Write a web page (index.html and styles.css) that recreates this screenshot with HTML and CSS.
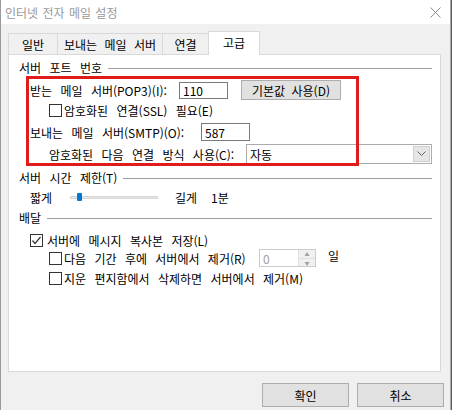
FILE: index.html
```html
<!DOCTYPE html>
<html lang="ko">
<head>
    <meta charset="UTF-8">
    <title>인터넷 전자 메일 설정</title>
    <link rel="stylesheet" href="styles.css">
</head>
<body>
    <div class="window">
        <div class="titlebar">
            <span class="title">인터넷 전자 메일 설정</span>
            <svg class="close" width="11" height="11" viewBox="0 0 11 11">
                <path d="M0.5 0.5 L10.5 10.5 M10.5 0.5 L0.5 10.5" stroke="#8c8c8c" stroke-width="1" fill="none"/>
            </svg>
        </div>

        <div class="content">
            <div class="tabs">
                <div class="tab tab-general">일반</div>
                <div class="tab tab-outgoing">보내는 메일 서버</div>
                <div class="tab tab-connect">연결</div>
                <div class="tab tab-advanced active">고급</div>
            </div>

            <div class="panel">
                <div class="group-title">서버 포트 번호</div>

                <div class="row row-pop">
                    <span class="label label-pop">받는 메일 서버(POP3)(I):</span>
                    <div class="textbox tb-pop">110</div>
                    <div class="button btn-default">기본값 사용(D)</div>
                </div>
                <div class="row row-ssl">
                    <span class="checkbox"></span>
                    <span class="check-label">암호화된 연결(SSL) 필요(E)</span>
                </div>
                <div class="row row-smtp">
                    <span class="label label-smtp">보내는 메일 서버(SMTP)(O):</span>
                    <div class="textbox tb-smtp">587</div>
                </div>
                <div class="row row-enc">
                    <span class="label label-enc">암호화된 다음 연결 방식 사용(C):</span>
                    <div class="select">
                        <span class="select-value">자동</span>
                        <span class="select-arrow">
                            <svg width="9" height="6" viewBox="0 0 9 6">
                                <path d="M0.5 0.5 L4.5 4.5 L8.5 0.5" stroke="#606060" fill="none"/>
                            </svg>
                        </span>
                    </div>
                </div>

                <div class="group-title group-timeout">서버 시간 제한(T)</div>
                <div class="row row-slider">
                    <span class="slider-short">짧게</span>
                    <div class="slider">
                        <div class="slider-track"></div>
                        <div class="slider-thumb"></div>
                    </div>
                    <span class="slider-long">길게</span>
                    <span>1분</span>
                </div>

                <div class="group-title group-delivery">배달</div>
                <div class="row row-keep">
                    <span class="checkbox checked">
                        <svg width="11" height="11" viewBox="0 0 11 11">
                            <path d="M1.5 5.5 L4 8.5 L9.5 2" stroke="#333" stroke-width="1.2" fill="none"/>
                        </svg>
                    </span>
                    <span class="check-label">서버에 메시지 복사본 저장(L)</span>
                </div>
                <div class="row row-remove">
                    <span class="checkbox"></span>
                    <span class="check-label label-remove">다음 기간 후에 서버에서 제거(R)</span>
                    <div class="spin">
                        <span class="spin-value">0</span>
                        <span class="spin-buttons">
                            <span class="spin-up">▲</span>
                            <span class="spin-down">▼</span>
                        </span>
                    </div>
                    <span class="days">일</span>
                </div>
                <div class="row row-deleted">
                    <span class="checkbox"></span>
                    <span class="check-label">지운 편지함에서 삭제하면 서버에서 제거(M)</span>
                </div>

                <div class="highlight"></div>
            </div>

            <div class="dialog-buttons">
                <div class="button btn-dialog">확인</div>
                <div class="button btn-dialog">취소</div>
            </div>
        </div>
    </div>
</body>
</html>
```

FILE: styles.css
```css
body {
    margin: 0;
    overflow: hidden;
    background-color: #5a5a5a;
    font-family: "Noto Sans CJK KR", sans-serif;
    font-size: 12px;
    color: #000;
    word-spacing: 5px;
}
.window {
    width: 449px;
    height: 410px;
    background-color: #f0f0f0;
    border-left: 1px solid #9a9a9a;
    border-right: 1px solid #aaaaaa;
}
.titlebar {
    height: 24px;
    background-color: #fff;
    display: flex;
    align-items: center;
    justify-content: space-between;
    padding: 0 9px 0 4px;
}
.title {
    color: #9a9a9a;
    font-size: 12px;
    word-spacing: 1px;
}
.close {
    margin-top: 1px;
}
.content {
    padding: 8px 0 0 7px;
}

/* pestañas */
.tabs {
    display: flex;
    align-items: flex-end;
    height: 22px;
}
.tab {
    height: 21px;
    box-sizing: border-box;
    border: 1px solid #d9d9d9;
    border-bottom: none;
    margin-right: -1px;
    display: flex;
    align-items: center;
    justify-content: center;
    font-size: 12px;
    word-spacing: 4px;
    background-color: #f0f0f0;
}
.tab-general { width: 50px; }
.tab-outgoing { width: 106px; }
.tab-connect { width: 47px; }
.tab-advanced { width: 52px; }
.tab.active {
    height: 24px;
    margin-bottom: -1px;
    background-color: #fff;
    position: relative;
    z-index: 1;
    padding-bottom: 3px;
}

.panel {
    position: relative;
    width: 431px;
    height: 312px;
    background-color: #fff;
    border: 1px solid #d9d9d9;
    padding: 4px 8px 0 10px;
    box-sizing: content-box;
    width: 413px;
}
.group-title {
    display: flex;
    align-items: center;
    height: 16px;
}
.group-title::after {
    content: "";
    flex-grow: 1;
    border-top: 1px solid #a0a0a0;
    margin-left: 6px;
    margin-top: 2px;
}
.group-timeout { margin-top: 5px; }
.group-delivery { margin-top: 4px; }

.row {
    display: flex;
    align-items: center;
    white-space: nowrap;
}
.row-pop { height: 20px; margin-top: 5px; padding-left: 11px; }
.row-ssl { height: 16px; margin-top: 2px; padding-left: 30px; }
.row-smtp { height: 18px; margin-top: 5px; padding-left: 11px; }
.row-enc { height: 20px; margin-top: 3px; padding-left: 30px; }
.row-slider { height: 16px; margin-top: 4px; padding-left: 11px; }
.row-keep { height: 16px; margin-top: 7px; padding-left: 11px; }
.row-remove { height: 18px; margin-top: 1px; padding-left: 30px; }
.row-deleted { height: 16px; margin-top: 3px; padding-left: 30px; }

.label-pop { width: 149px; }
.label-smtp { width: 171px; }
.label-enc { width: 197px; }

.textbox {
    box-sizing: border-box;
    border: 1px solid #7a7a7a;
    background-color: #fff;
    padding-left: 3px;
    display: flex;
    align-items: center;
}
.tb-pop { width: 49px; height: 17px; }
.tb-smtp { width: 49px; height: 18px; }

.button {
    box-sizing: border-box;
    background-color: #e1e1e1;
    border: 1px solid #adadad;
    display: flex;
    align-items: center;
    justify-content: center;
    word-spacing: 3px;
}
.btn-default {
    width: 100px;
    height: 20px;
    margin-left: 13px;
}

.checkbox {
    width: 13px;
    height: 13px;
    box-sizing: border-box;
    border: 1px solid #333;
    background-color: #fff;
    display: flex;
    align-items: center;
    justify-content: center;
}
.check-label {
    margin-left: 2px;
}
.row-keep .check-label {
    margin-left: 4px;
}
.label-remove {
    width: 195px;
}

.select {
    box-sizing: border-box;
    width: 186px;
    height: 20px;
    border: 1px solid #acacac;
    background-color: #fff;
    display: flex;
    align-items: center;
    justify-content: space-between;
    padding: 0 1px 0 3px;
}
.select-arrow {
    width: 17px;
    height: 16px;
    box-sizing: border-box;
    background-color: #e6e6e6;
    border: 1px solid #cfcfcf;
    display: flex;
    align-items: center;
    justify-content: center;
}

.slider-short { width: 40px; }
.slider {
    position: relative;
    width: 88px;
    height: 16px;
    display: flex;
    align-items: center;
}
.slider-track {
    width: 88px;
    height: 3px;
    background-color: #e7e7e7;
    box-shadow: inset 0 0 0 1px #d6d6d6;
}
.slider-thumb {
    position: absolute;
    left: 7px;
    top: 4px;
    width: 5px;
    height: 8px;
    background-color: #0078d7;
    border-radius: 1px;
}
.slider-long {
    width: 36px;
    margin-left: 17px;
}

.spin {
    box-sizing: border-box;
    width: 57px;
    height: 18px;
    border: 1px solid #cccccc;
    background-color: #fff;
    display: flex;
    justify-content: space-between;
    align-items: center;
    padding-left: 3px;
}
.spin-value {
    color: #a0a0a0;
}
.spin-buttons {
    width: 16px;
    height: 16px;
    display: flex;
    flex-direction: column;
    background-color: #f0f0f0;
    border-left: 1px solid #e0e0e0;
}
.spin-up, .spin-down {
    flex-grow: 1;
    font-size: 5px;
    color: #a0a0a0;
    display: flex;
    align-items: center;
    justify-content: center;
}
.spin-up {
    border-bottom: 1px solid #e0e0e0;
}
.days {
    margin-left: 12px;
    margin-top: -6px;
}

/* recuadro rojo de la captura */
.highlight {
    position: absolute;
    left: 17px;
    top: 21px;
    width: 327px;
    height: 84px;
    border: 3px solid #e01b1b;
}

.dialog-buttons {
    display: flex;
    justify-content: flex-end;
    gap: 8px;
    margin-top: 11px;
    padding-right: 6px;
}
.btn-dialog {
    width: 87px;
    height: 24px;
}
```
